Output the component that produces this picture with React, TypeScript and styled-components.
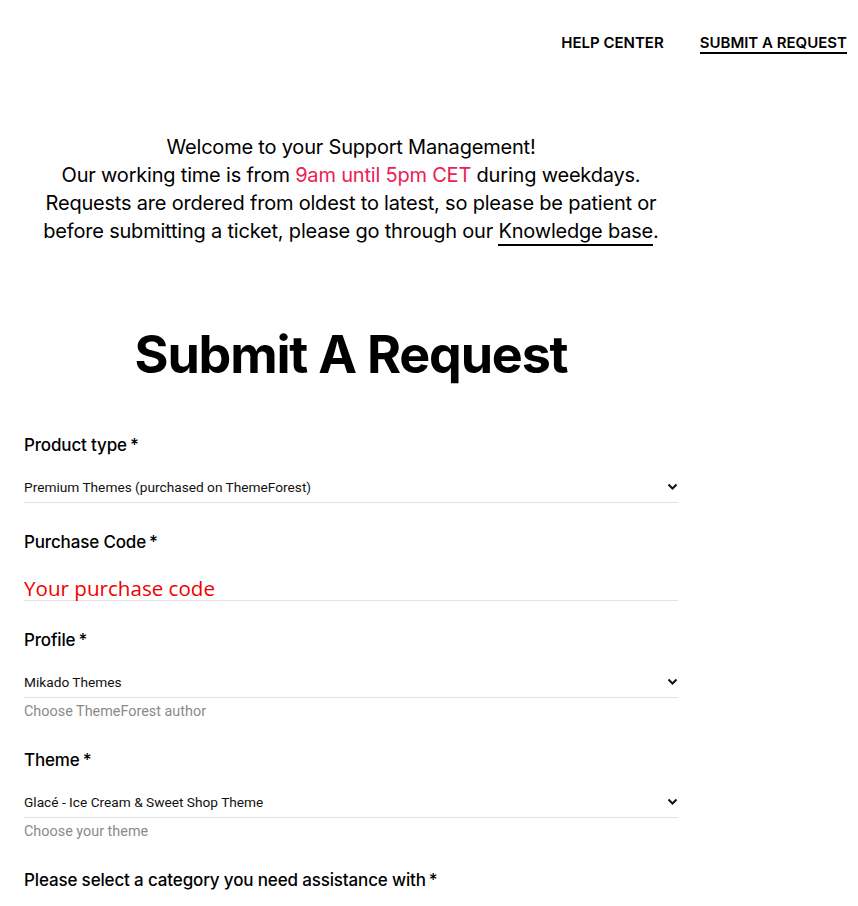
import React from "react";
import styled, { createGlobalStyle } from "styled-components";

const Global = createGlobalStyle`
  html, body { margin: 0; padding: 0; background: #fff; }
  body { font-family: "Inter", "Noto Sans", sans-serif; color: #000; }
  * { box-sizing: border-box; }
`;

const Header = styled.header`
  display: flex;
  justify-content: flex-end;
  align-items: flex-start;
  gap: 36px;
  padding: 33px 11px 0 0;
  height: 84px;
`;

const NavLink = styled.a<{ $active?: boolean }>`
  font-family: "Inter", sans-serif;
  font-weight: 600;
  font-size: 15px;
  line-height: 19px;
  letter-spacing: 0;
  text-transform: uppercase;
  color: #000;
  text-decoration: none;
  padding-bottom: 0;
  border-bottom: 2px solid ${(p) => (p.$active ? "#000" : "transparent")};
`;

const Main = styled.main`
  width: 654px;
  margin-left: 24px;
`;

const Intro = styled.p`
  margin: 49px 0 0;
  text-align: center;
  font-size: 20px;
  line-height: 28px;
  letter-spacing: -0.2px;
  font-weight: 400;
`;

const Highlight = styled.span`
  color: #eb2255;
`;

const KbLink = styled.a`
  color: #000;
  text-decoration: none;
  border-bottom: 2px solid #000;
  padding-bottom: 1px;
`;

const Title = styled.h1`
  margin: 80px 0 0;
  text-align: center;
  font-size: 52px;
  line-height: 60px;
  font-weight: 700;
  letter-spacing: -1.2px;
`;

const Form = styled.form`
  margin-top: 48px;
  display: flex;
  flex-direction: column;
  gap: 27px;
`;

const Field = styled.div`
  display: flex;
  flex-direction: column;
`;

const Label = styled.label`
  font-size: 17px;
  line-height: 24px;
  font-weight: 500;
  letter-spacing: -0.15px;
`;

const Req = styled.span`
  margin-left: 3px;
`;

const SelectRow = styled.div`
  margin-top: 11px;
  height: 35px;
  display: flex;
  align-items: center;
  justify-content: space-between;
  border-bottom: 1px solid #e2e2e2;
  padding-top: 4px;
`;

const SelectValue = styled.span`
  font-family: "Roboto", sans-serif;
  font-size: 13.7px;
  color: #111;
`;

const Chevron = styled.svg`
  width: 11px;
  height: 8px;
`;

const InputRow = styled.div`
  margin-top: 6px;
  height: 41px;
  display: flex;
  align-items: flex-end;
  border-bottom: 1px solid #e2e2e2;
`;

const Placeholder = styled.span`
  font-family: "Open Sans", sans-serif;
  font-size: 20.6px;
  line-height: 24px;
  color: #ee0000;
`;

const Helper = styled.span`
  margin-top: 5px;
  font-family: "Roboto", sans-serif;
  font-size: 14.4px;
  line-height: 18px;
  color: #8a8a8a;
`;

function Select({ value }: { value: string }) {
  return (
    <SelectRow>
      <SelectValue>{value}</SelectValue>
      <Chevron viewBox="0 0 11 8">
        <polyline points="1.5,1.5 5.5,5.5 9.5,1.5" fill="none" stroke="#111" strokeWidth="2" />
      </Chevron>
    </SelectRow>
  );
}

export default function App() {
  return (
    <>
      <Global />
      <Header>
        <NavLink href="#">Help Center</NavLink>
        <NavLink href="#" $active>
          Submit A Request
        </NavLink>
      </Header>
      <Main>
        <Intro>
          Welcome to your Support Management!
          <br />
          Our working time is from <Highlight>9am until 5pm CET</Highlight> during weekdays.
          <br />
          Requests are ordered from oldest to latest, so please be patient or
          <br />
          before submitting a ticket, please go through our <KbLink href="#">Knowledge base</KbLink>.
        </Intro>
        <Title>Submit A Request</Title>
        <Form>
          <Field>
            <Label>
              Product type<Req>*</Req>
            </Label>
            <Select value="Premium Themes (purchased on ThemeForest)" />
          </Field>
          <Field>
            <Label>
              Purchase Code<Req>*</Req>
            </Label>
            <InputRow>
              <Placeholder>Your purchase code</Placeholder>
            </InputRow>
          </Field>
          <Field>
            <Label>
              Profile<Req>*</Req>
            </Label>
            <Select value="Mikado Themes" />
            <Helper>Choose ThemeForest author</Helper>
          </Field>
          <Field>
            <Label>
              Theme<Req>*</Req>
            </Label>
            <Select value="Glacé - Ice Cream & Sweet Shop Theme" />
            <Helper>Choose your theme</Helper>
          </Field>
          <Field>
            <Label>
              Please select a category you need assistance with<Req>*</Req>
            </Label>
          </Field>
        </Form>
      </Main>
    </>
  );
}
